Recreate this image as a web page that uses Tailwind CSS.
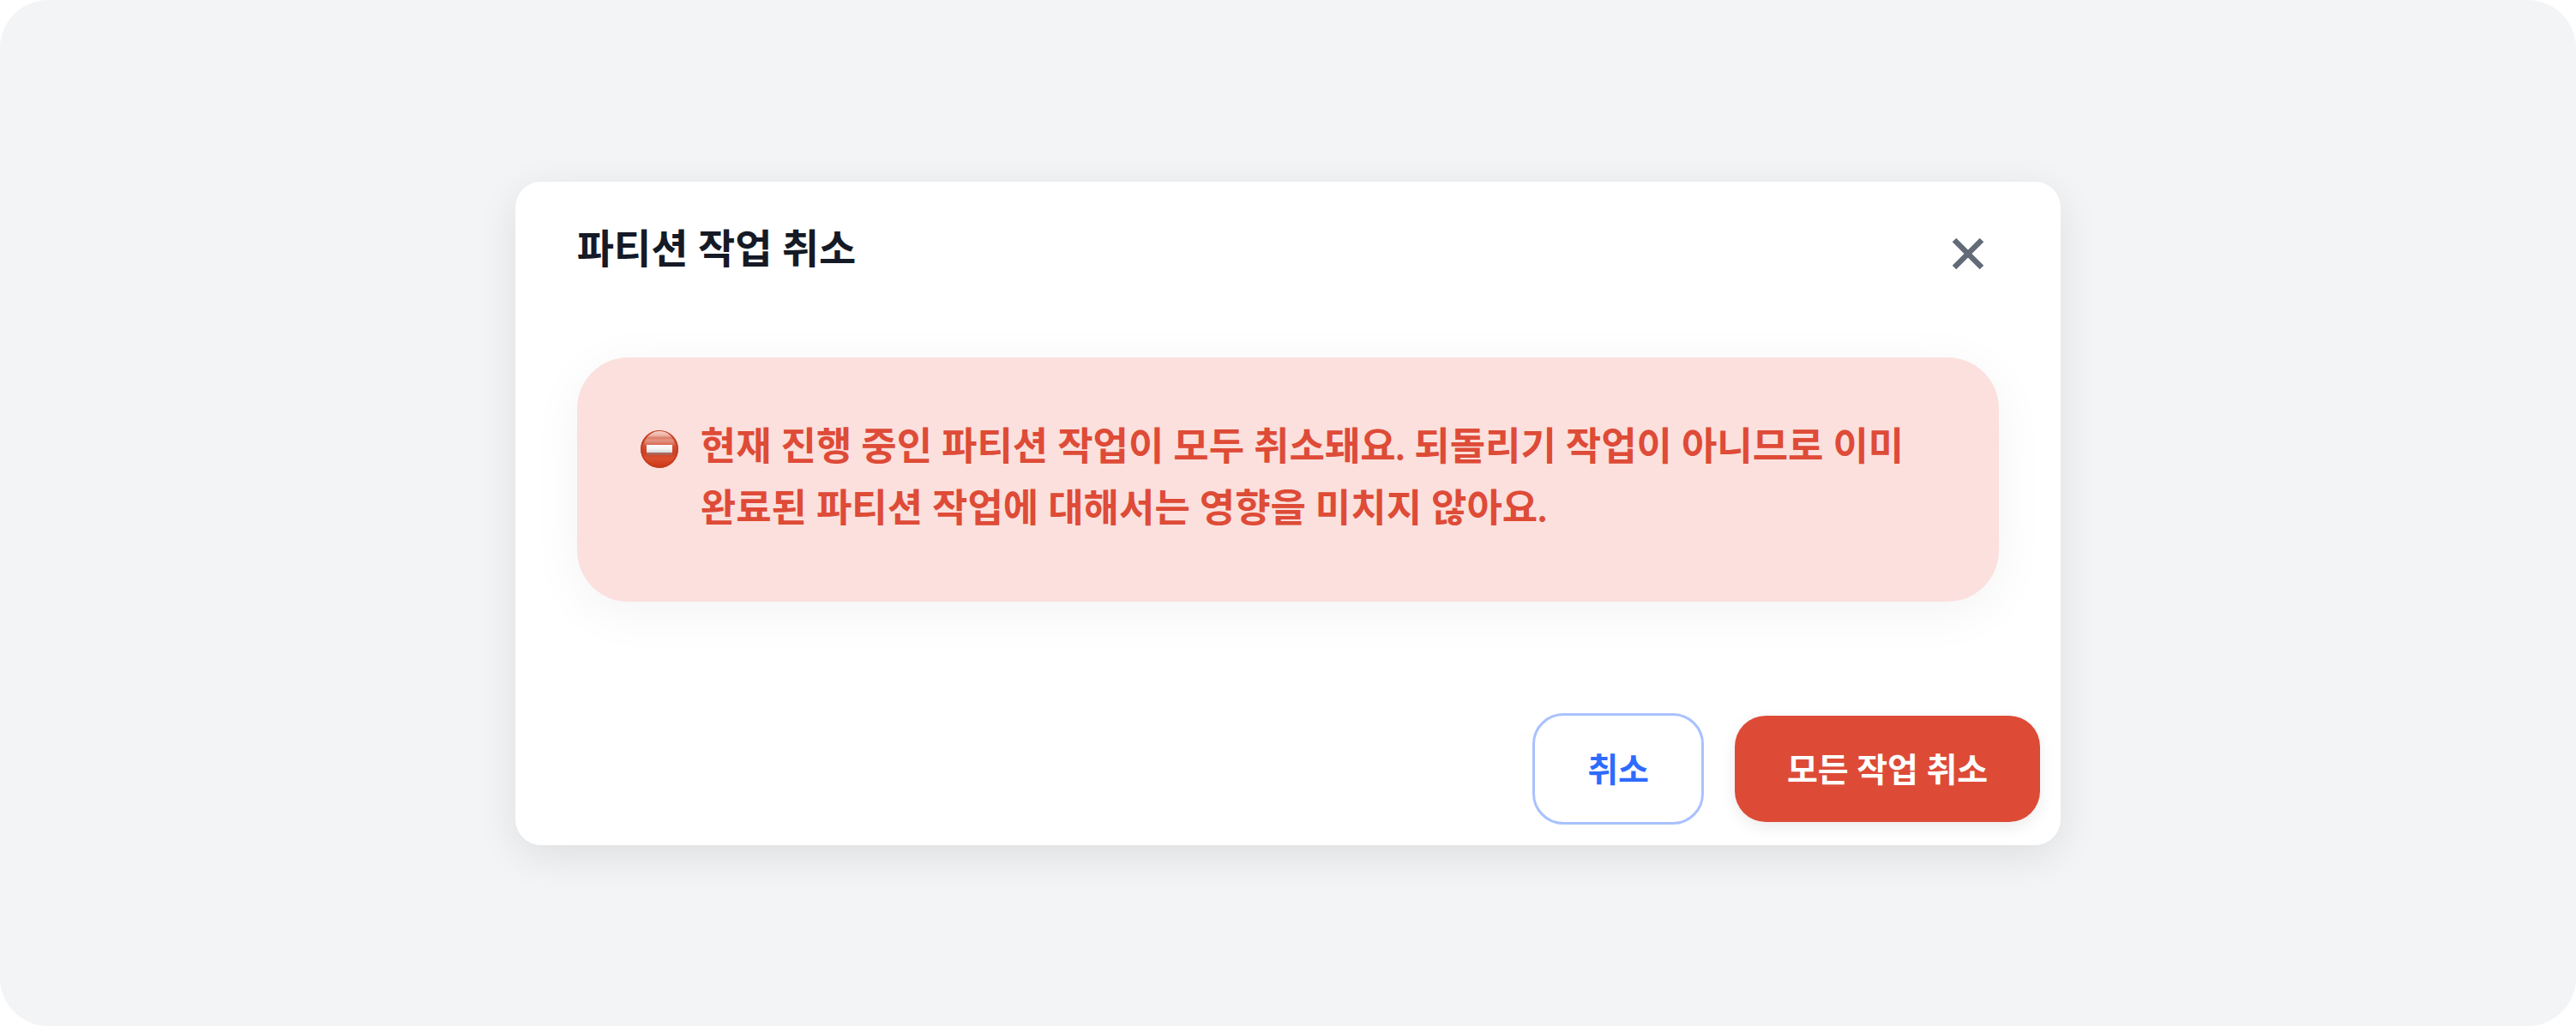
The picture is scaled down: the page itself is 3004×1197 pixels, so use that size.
<!doctype html>
<html lang="ko">
	<head>
		<meta charset="UTF-8" />
		<meta name="viewport" content="width=device-width, initial-scale=1.0" />
		<title>파티션 작업 취소</title>
		<script src="https://cdn.jsdelivr.net/npm/@tailwindcss/browser@4"></script>
	</head>
	<body class="bg-white font-[Lato,'Noto_Sans_CJK_KR',sans-serif]">
		<main
			class="flex min-h-screen items-center justify-center rounded-[56px] bg-gray-100"
		>
			<div
				role="dialog"
				aria-labelledby="dialog-title"
				class="w-3/5 rounded-[30px] bg-white shadow-[0_12px_48px_rgba(0,0,0,0.09)]"
			>
				<header class="flex items-start justify-between px-[72px] pt-[45px]">
					<h1
						id="dialog-title"
						class="text-[47px] leading-[64px] font-bold text-[#151a26]"
					>
						파티션 작업 취소
					</h1>
					<button type="button" aria-label="닫기" class="pt-[15px] pr-3">
						<svg
							class="h-12 w-12"
							viewBox="0 0 48 48"
							fill="none"
							stroke="#646b78"
							stroke-width="6.5"
							aria-hidden="true"
						>
							<path d="M8 8l32 32M40 8L8 40" />
						</svg>
					</button>
				</header>

				<div class="px-[72px] pt-24">
					<div
						role="alert"
						class="flex gap-6 rounded-[60px] bg-[#fbe0dd] px-[72px] pt-[67px] pb-[74px] shadow-[0_12px_60px_rgba(0,0,0,0.05)]"
					>
						<svg
							class="mt-4 h-12 w-12 shrink-0"
							viewBox="0 0 48 48"
							aria-hidden="true"
						>
							<defs>
								<linearGradient id="sign" x1="0" y1="0" x2="0" y2="1">
									<stop offset="0" stop-color="#d9553a" />
									<stop offset="0.2" stop-color="#d8634a" />
									<stop offset="0.6" stop-color="#cf3f22" />
									<stop offset="0.75" stop-color="#d9502f" />
									<stop offset="1" stop-color="#cc3312" />
								</linearGradient>
								<linearGradient id="gloss" x1="0" y1="0" x2="0" y2="1">
									<stop offset="0" stop-color="#f6d0c6" />
									<stop offset="0.3" stop-color="#ecb3a5" />
									<stop offset="0.45" stop-color="#dc7d68" />
									<stop offset="0.65" stop-color="#e29583" />
									<stop offset="1" stop-color="#d65f46" />
								</linearGradient>
								<linearGradient id="bar" x1="0" y1="0" x2="0" y2="1">
									<stop offset="0" stop-color="#ffffff" />
									<stop offset="0.5" stop-color="#f4f4f4" />
									<stop offset="1" stop-color="#d6d9d8" />
								</linearGradient>
							</defs>
							<circle cx="24" cy="24" r="22" fill="url(#sign)" />
							<circle cx="24" cy="24" r="21" fill="none" stroke="#c23c20" stroke-width="1.5" />
							<path
								d="M6 20C7 10 14 3 24 3s17 7 18 17z"
								fill="url(#gloss)"
							/>
							<path d="M9 28h30v3H9z" fill="#ad6456" />
							<path d="M9 19h30v9H9z" fill="url(#bar)" />
						</svg>
						<p class="text-[45px] leading-[72px] font-bold text-[#de4b37]">
							현재 진행 중인 파티션 작업이 모두 취소돼요. 되돌리기 작업이 아니므로
							이미 완료된 파티션 작업에 대해서는 영향을 미치지 않아요.
						</p>
					</div>
				</div>

				<footer class="flex items-center justify-end gap-9 px-6 pt-[130px] pb-6">
					<button
						type="button"
						class="rounded-[36px] border-3 border-[#a9c1ff] bg-white px-[61px] py-8 text-[39px] leading-[60px] font-bold text-[#2e6bff]"
					>
						취소
					</button>
					<button
						type="button"
						class="rounded-[36px] bg-[#dd4b37] px-[61px] py-8 text-[39px] leading-[60px] font-bold text-white shadow-[0_6px_18px_rgba(0,0,0,0.08)]"
					>
						모든 작업 취소
					</button>
				</footer>
			</div>
		</main>
	</body>
</html>
